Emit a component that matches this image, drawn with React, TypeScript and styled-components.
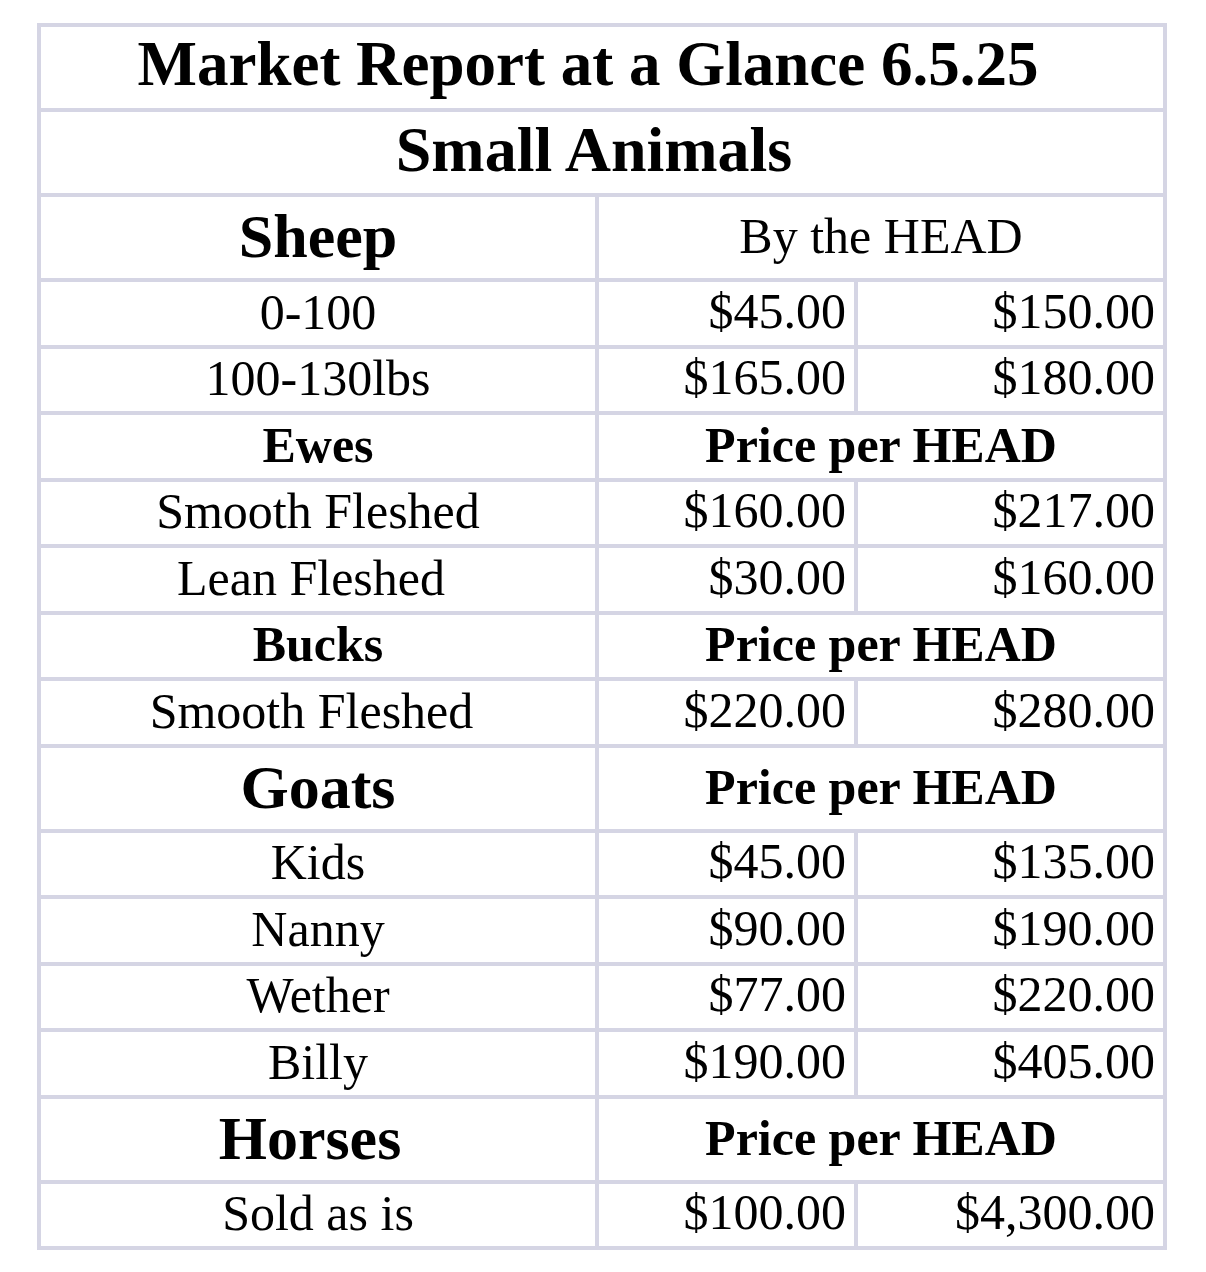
import React from "react";
import styled, { createGlobalStyle } from "styled-components";

type Line = { label: string; low: string; high: string; shift?: number };
type Section = { name: string; big?: boolean; unit: string; shift?: number; rows: Line[] };

const sections: Section[] = [
  {
    name: "Sheep",
    big: true,
    unit: "By the HEAD",
    rows: [
      { label: "0-100", low: "$45.00", high: "$150.00" },
      { label: "100-130lbs", low: "$165.00", high: "$180.00" },
    ],
  },
  {
    name: "Ewes",
    unit: "Price per HEAD",
    rows: [
      { label: "Smooth Fleshed", low: "$160.00", high: "$217.00" },
      { label: "Lean Fleshed", low: "$30.00", high: "$160.00", shift: 14 },
    ],
  },
  {
    name: "Bucks",
    unit: "Price per HEAD",
    rows: [{ label: "Smooth Fleshed", low: "$220.00", high: "$280.00", shift: 13 }],
  },
  {
    name: "Goats",
    big: true,
    unit: "Price per HEAD",
    rows: [
      { label: "Kids", low: "$45.00", high: "$135.00" },
      { label: "Nanny", low: "$90.00", high: "$190.00" },
      { label: "Wether", low: "$77.00", high: "$220.00" },
      { label: "Billy", low: "$190.00", high: "$405.00" },
    ],
  },
  {
    name: "Horses",
    big: true,
    unit: "Price per HEAD",
    shift: 16,
    rows: [{ label: "Sold as is", low: "$100.00", high: "$4,300.00" }],
  },
];

const MarketReport = () => {
  return (
    <Table>
      <Banner $size={63} $nudge={28}>
        Market Report at a Glance 6.5.25
      </Banner>
      <Banner $size={64} $nudge={16}>
        Small Animals
      </Banner>
      {sections.map((s) => (
        <React.Fragment key={s.name}>
          <Label $tall={s.big} $bold $size={s.big ? 62 : 50} $shift={s.shift}>
            {s.name}
          </Label>
          <Unit $tall={s.big} $bold={s.unit !== "By the HEAD"}>
            {s.unit}
          </Unit>
          {s.rows.map((r) => (
            <React.Fragment key={s.name + r.label}>
              <Label $shift={r.shift}>{r.label}</Label>
              <Price>{r.low}</Price>
              <Price>{r.high}</Price>
            </React.Fragment>
          ))}
        </React.Fragment>
      ))}
    </Table>
  );
};

export default function App() {
  return (
    <>
      <GlobalStyle />
      <Page>
        <MarketReport />
      </Page>
    </>
  );
}

const GlobalStyle = createGlobalStyle`
  html, body {
    margin: 0;
    padding: 0;
    background: #ffffff;
  }
  body {
    font-family: "Liberation Serif", "Times New Roman", serif;
    color: #000000;
  }
`;

const Page = styled.div`
  width: 1206px;
  min-height: 1272px;
  padding: 23px 0 0 37px;
  box-sizing: border-box;
`;

const Table = styled.div`
  width: 1130px;
  box-sizing: border-box;
  display: grid;
  grid-template-columns: 554px 255px 305px;
  gap: 4px;
  padding: 4px;
  background: #d5d5e4;
`;

const Cell = styled.div<{ $tall?: boolean; $bold?: boolean; $size?: number }>`
  background: #ffffff;
  height: ${(p) => (p.$tall ? "81px" : "62.5px")};
  box-sizing: border-box;
  display: flex;
  align-items: center;
  font-size: ${(p) => p.$size ?? 50}px;
  font-weight: ${(p) => (p.$bold ? 700 : 400)};
  line-height: 1;
  white-space: nowrap;
`;

const Banner = styled(Cell).attrs({ $tall: true, $bold: true })<{ $nudge?: number }>`
  grid-column: 1 / -1;
  justify-content: center;
  padding-right: ${(p) => p.$nudge ?? 0}px;
  padding-bottom: 6px;
`;

const Label = styled(Cell)<{ $shift?: number }>`
  justify-content: center;
  padding-right: ${(p) => p.$shift ?? 0}px;
  padding-bottom: 3px;
`;

const Unit = styled(Cell)`
  grid-column: 2 / 4;
  justify-content: center;
  padding-bottom: 3px;
`;

const Price = styled(Cell)`
  justify-content: flex-end;
  padding-right: 8px;
  padding-bottom: 5px;
`;
